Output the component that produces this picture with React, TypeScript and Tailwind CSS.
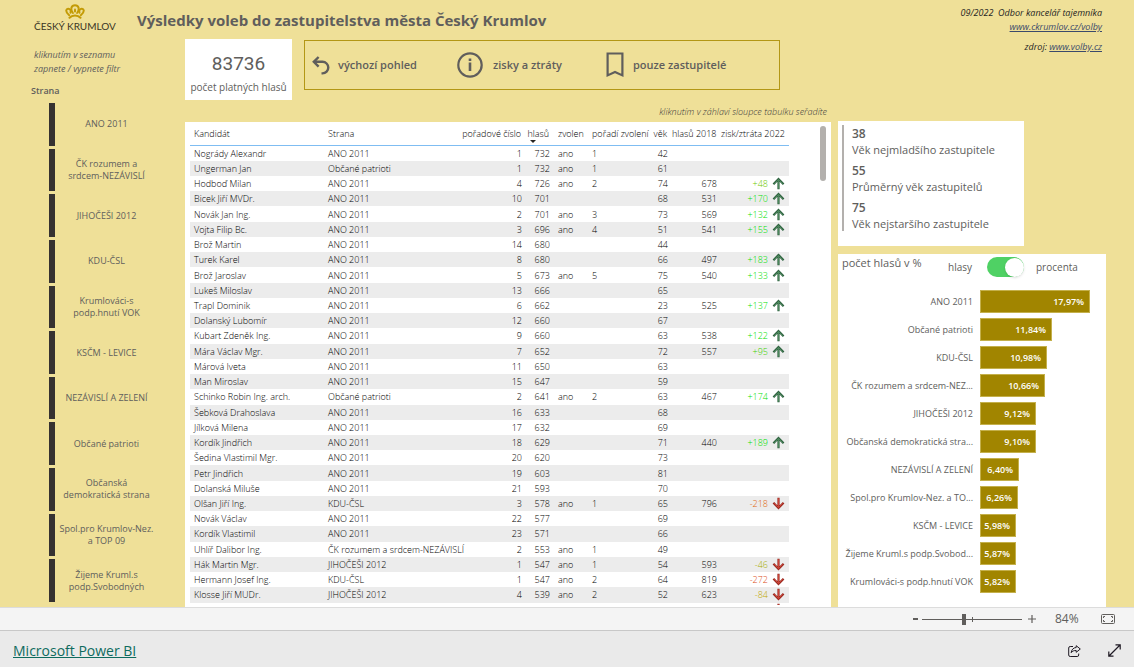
import React, { useState } from "react";

type Row = [
  name: string,
  party: string,
  no: number,
  votes: number,
  elected: string,
  order: string,
  age: number,
  votes2018: string,
  diff: string,
];

const A = "ANO 2011";
const rows: Row[] = [
  ["Nogrády Alexandr", A, 1, 732, "ano", "1", 42, "", ""],
  ["Ungerman Jan", "Občané patrioti", 1, 732, "ano", "1", 61, "", ""],
  ["Hodboď Milan", A, 4, 726, "ano", "2", 74, "678", "+48"],
  ["Bicek Jiří MVDr.", A, 10, 701, "", "", 68, "531", "+170"],
  ["Novák Jan Ing.", A, 2, 701, "ano", "3", 73, "569", "+132"],
  ["Vojta Filip Bc.", A, 3, 696, "ano", "4", 51, "541", "+155"],
  ["Brož Martin", A, 14, 680, "", "", 44, "", ""],
  ["Turek Karel", A, 8, 680, "", "", 66, "497", "+183"],
  ["Brož Jaroslav", A, 5, 673, "ano", "5", 75, "540", "+133"],
  ["Lukeš Miloslav", A, 13, 666, "", "", 65, "", ""],
  ["Trapl Dominik", A, 6, 662, "", "", 23, "525", "+137"],
  ["Dolanský Lubomír", A, 12, 660, "", "", 67, "", ""],
  ["Kubart Zdeněk Ing.", A, 9, 660, "", "", 63, "538", "+122"],
  ["Mára Václav Mgr.", A, 7, 652, "", "", 72, "557", "+95"],
  ["Márová Iveta", A, 11, 650, "", "", 63, "", ""],
  ["Man Miroslav", A, 15, 647, "", "", 59, "", ""],
  ["Schinko Robin Ing. arch.", "Občané patrioti", 2, 641, "ano", "2", 63, "467", "+174"],
  ["Šebková Drahoslava", A, 16, 633, "", "", 68, "", ""],
  ["Jílková Milena", A, 17, 632, "", "", 69, "", ""],
  ["Kordík Jindřich", A, 18, 629, "", "", 71, "440", "+189"],
  ["Šedina Vlastimil Mgr.", A, 20, 620, "", "", 73, "", ""],
  ["Petr Jindřich", A, 19, 603, "", "", 81, "", ""],
  ["Dolanská Miluše", A, 21, 593, "", "", 70, "", ""],
  ["Olšan Jiří Ing.", "KDU-ČSL", 3, 578, "ano", "1", 65, "796", "-218"],
  ["Novák Václav", A, 22, 577, "", "", 69, "", ""],
  ["Kordík Vlastimil", A, 23, 571, "", "", 66, "", ""],
  ["Uhlíř Dalibor Ing.", "ČK rozumem a srdcem-NEZÁVISLÍ", 2, 553, "ano", "1", 49, "", ""],
  ["Hák Martin Mgr.", "JIHOČEŠI 2012", 1, 547, "ano", "1", 54, "593", "-46"],
  ["Hermann Josef Ing.", "KDU-ČSL", 1, 547, "ano", "2", 64, "819", "-272"],
  ["Klosse Jiří MUDr.", "JIHOČEŠI 2012", 4, 539, "ano", "2", 52, "623", "-84"],
];

const diffColor = (d: string) => {
  const n = Number(d);
  if (n > 100) return "text-[#00e000]";
  if (n > 60) return "text-[#3fd000]";
  if (n > 0) return "text-[#6cc800]";
  if (n > -60) return "text-[#a8ac00]";
  if (n > -100) return "text-[#c0a800]";
  if (n > -250) return "text-[#e0660c]";
  return "text-[#dc4e20]";
};

const parties = [
  ["ANO 2011"],
  ["ČK rozumem a", "srdcem-NEZÁVISLÍ"],
  ["JIHOČEŠI 2012"],
  ["KDU-ČSL"],
  ["Krumlováci-s", "podp.hnutí VOK"],
  ["KSČM - LEVICE"],
  ["NEZÁVISLÍ A ZELENÍ"],
  ["Občané patrioti"],
  ["Občanská", "demokratická strana"],
  ["Spol.pro Krumlov-Nez.", "a TOP 09"],
  ["Žijeme Kruml.s", "podp.Svobodných"],
];

const bars: [string, number][] = [
  ["ANO 2011", 17.97],
  ["Občané patrioti", 11.84],
  ["KDU-ČSL", 10.98],
  ["ČK rozumem a srdcem-NEZ...", 10.66],
  ["JIHOČEŠI 2012", 9.12],
  ["Občanská demokratická stra...", 9.1],
  ["NEZÁVISLÍ A ZELENÍ", 6.4],
  ["Spol.pro Krumlov-Nez. a TO...", 6.26],
  ["KSČM - LEVICE", 5.98],
  ["Žijeme Kruml.s podp.Svobod...", 5.87],
  ["Krumlováci-s podp.hnutí VOK", 5.82],
];

const ages = [
  ["38", "Věk nejmladšího zastupitele"],
  ["55", "Průměrný věk zastupitelů"],
  ["75", "Věk nejstaršího zastupitele"],
];

function Crown() {
  return (
    <svg viewBox="0 0 20 15" className="h-[15px] w-5" fill="none" stroke="#c39b06" strokeWidth="2" strokeLinecap="round">
      <path d="M4.200 11.200C2.400 9.800 1 8 1.300 6.200c.4-1.800 3-2 4-.4.5.9.5 2 .2 2.900" />
      <path d="M15.800 11.200c1.800-1.400 3.200-3.200 2.900-5-.4-1.800-3-2-4-.4-.5.9-.5 2-.2 2.900" />
      <path d="M7.900 9C6.700 7.500 5.900 5.500 6.400 3.700 7 1.900 9 1.200 10 1.200s3 .7 3.600 2.500c.5 1.800-.3 3.800-1.500 5.300" />
      <path d="M10 5.500v2" />
      <path d="M4.500 13.700c1.400-1.500 3.400-2.300 5.500-2.300s4.100.8 5.500 2.300" />
    </svg>
  );
}

function Arrow({ down }: { down: boolean }) {
  return (
    <svg viewBox="0 0 13 13" className={down ? "h-[13px] w-[13px] rotate-180" : "h-[13px] w-[13px]"} fill="none" aria-hidden="true">
      <path d="M6.500 12.300V2.500M1.400 7.200l5.100-5.200 5.100 5.200" stroke={down ? "#9c2a20" : "#2f6340"} strokeWidth="2.200" />
      <path d="M6.500 11.600V2.700M2.300 6.700l4.200-4.200 4.200 4.200" stroke={down ? "#d0463a" : "#4f8a5f"} strokeWidth=".9" />
    </svg>
  );
}

function UndoIcon() {
  return (
    <svg viewBox="0 0 18 19" className="h-[19px] w-[18px]" fill="none" stroke="#605e5c" strokeWidth="2.400">
      <path d="M2 5.800h8.500a5.600 5.600 0 0 1 0 11.600H9.500" />
      <path d="M6.600 1 1.800 5.800l4.800 4.800" />
    </svg>
  );
}

function InfoIcon() {
  return (
    <svg viewBox="0 0 26 26" className="size-[26px]" fill="none" stroke="#605e5c">
      <circle cx="13" cy="13" r="11.700" strokeWidth="2.200" />
      <path d="M13 10.500V19M13 6.500v2.500" strokeWidth="2.600" />
    </svg>
  );
}

function BookmarkIcon() {
  return (
    <svg viewBox="0 0 18 26" className="h-[26px] w-[18px]" fill="none" stroke="#605e5c" strokeWidth="2.200">
      <path d="M1.600 1.500h14.800V23.400L9 20l-7.400 3.400z" />
    </svg>
  );
}

function Sidebar() {
  return (
    <aside className="flex w-[185px] shrink-0 flex-col pb-[5px] text-[#605e5c]">
      <p className="pt-[9px] pl-[34px] text-[9px] leading-[14px] italic">
        kliknutím v seznamu
        <br />
        zapnete / vypnete filtr
      </p>
      <h2 className="mt-2 pl-[31px] text-[9px] leading-[14px] font-semibold">Strana</h2>
      <div className="mt-[5px] flex flex-1 flex-col gap-[3px] pl-[49px]">
        {parties.map((lines) => (
          <button key={lines[0]} type="button" className="flex flex-1 items-stretch text-[9px] leading-[12px]">
            <span className="w-[6px] bg-[#363230]" />
            <span className="flex w-[103px] flex-col justify-center text-center whitespace-nowrap">
              {lines.map((l) => (
                <span key={l}>{l}</span>
              ))}
            </span>
          </button>
        ))}
      </div>
    </aside>
  );
}

function Candidates() {
  return (
    <section className="flex-1 bg-white pr-[42px] pl-[5px]">
      <div className="mb-[2px] h-[483px] overflow-hidden">
        <table className="h-[494px] w-full table-fixed border-collapse text-[9px] leading-[15px] font-light whitespace-nowrap text-black">
          <colgroup>
            <col className="w-[134px]" />
            <col />
            <col className="w-[65px]" />
            <col className="w-[28px]" />
            <col className="w-[34px]" />
            <col className="w-[63px]" />
            <col className="w-[21px]" />
            <col className="w-[49px]" />
            <col className="w-[68px]" />
          </colgroup>
          <thead>
            <tr className="h-[23px] border-b border-[#7fbdf2] text-left align-middle [&>th]:py-0 [&>th]:font-light">
              <th className="px-1">Kandidát</th>
              <th className="px-1">Strana</th>
              <th className="pr-[5px] text-right">pořadové číslo</th>
              <th className="relative pr-[5px] text-right">
                hlasů
                <span className="absolute top-[18px] left-[4px] border-x-[3px] border-t-[3px] border-x-transparent border-t-[#252423]" />
              </th>
              <th className="px-1">zvolen</th>
              <th className="px-1">pořadí zvolení</th>
              <th className="pr-[5px] text-right">věk</th>
              <th className="pr-[5px] text-right">hlasů 2018</th>
              <th className="pr-[5px] text-right">zisk/ztráta 2022</th>
            </tr>
          </thead>
          <tbody>
            {rows.map((r) => (
              <tr key={r[0]} className="even:bg-[#ececec] [&>td]:px-1 [&>td]:py-0">
                <td>{r[0]}</td>
                <td>{r[1]}</td>
                <td className="text-right">{r[2]}</td>
                <td className="text-right">{r[3]}</td>
                <td>{r[4]}</td>
                <td>{r[5]}</td>
                <td className="text-right">{r[6]}</td>
                <td className="text-right">{r[7]}</td>
                <td>
                  {r[8] && (
                    <span className="flex items-center justify-end gap-[4px]">
                      <span className={diffColor(r[8])}>{r[8]}</span>
                      <Arrow down={r[8].startsWith("-")} />
                    </span>
                  )}
                </td>
              </tr>
            ))}
            <tr>
              <td colSpan={8} />
              <td className="px-1 py-0">
                <span className="flex justify-end">
                  <Arrow down />
                </span>
              </td>
            </tr>
          </tbody>
        </table>
      </div>
    </section>
  );
}

function ChartCard() {
  const [percent, setPercent] = useState(true);
  return (
    <section className="mt-2 flex-1 bg-white text-[#605e5c]">
      <div className="flex h-9 pl-1">
        <h2 className="w-[106px] text-[11px] leading-[17px]">počet hlasů v %</h2>
        <label className="flex h-[26px] items-center text-[10px]">
          <span className="w-[39px]">hlasy</span>
          <input
            type="checkbox"
            role="switch"
            aria-label="hlasy / procenta"
            checked={percent}
            onChange={(e) => setPercent(e.target.checked)}
            className="flex h-5 w-[37px] appearance-none items-center rounded-full bg-[#d0d0d0] before:size-[19px] before:rounded-full before:bg-white before:shadow checked:justify-end checked:bg-[#4fd164]"
          />
          <span className="pl-3">procenta</span>
        </label>
      </div>
      <ul className="flex flex-col gap-[5px] text-[9px]">
        {bars.map(([name, v]) => (
          <li key={name} className="flex h-[23px] items-center">
            <span className="flex w-[135px] justify-end whitespace-nowrap">{name}</span>
            <span
              className="ml-[7px] flex h-full items-center justify-end border border-[#c4b04c] bg-[#a18500] pr-[5px] font-semibold text-white"
              style={{ width: Math.round(v * 6.1) }}
            >
              {v.toFixed(2).replace(".", ",")}%
            </span>
          </li>
        ))}
      </ul>
    </section>
  );
}

export default function App() {
  const [zoom, setZoom] = useState(42);
  return (
    <div className="flex min-h-screen flex-col font-['Open_Sans','Noto_Sans',sans-serif]">
      <main className="flex flex-1 bg-[#efe098]">
        <div className="flex min-w-0 flex-1 flex-col">
          <header className="flex h-[39px]">
            <div className="flex w-[137px] flex-col items-center pt-1 pl-[13px] text-[#3a3524]">
              <Crown />
              <span className="font-['Lato',sans-serif] text-[10px] leading-[14px]">ČESKÝ KRUMLOV</span>
            </div>
            <h1 className="pt-[9px] text-[15px] leading-[22px] font-bold text-[#605e5c]">
              Výsledky voleb do zastupitelstva města Český Krumlov
            </h1>
          </header>
          <div className="flex flex-1">
            <Sidebar />
            <div className="flex min-w-0 flex-1 flex-col">
              <div className="flex items-start gap-3">
                <div className="flex h-[61px] w-[107px] flex-col items-center bg-white pt-3 text-[#605e5c]">
                  <span className="font-['Roboto',sans-serif] text-[19px] leading-[25px]">83736</span>
                  <span className="text-[10px] leading-[23px] whitespace-nowrap">počet platných hlasů</span>
                </div>
                <nav className="mt-px flex h-[50px] w-[476px] items-center border border-[#b39715] pl-[7px] text-[11px] font-semibold whitespace-nowrap text-[#605e5c]">
                  <button type="button" className="flex w-[145px] items-center gap-2">
                    <UndoIcon />
                    výchozí pohled
                  </button>
                  <button type="button" className="flex w-[149px] items-center gap-[10px]">
                    <InfoIcon />
                    zisky a ztráty
                  </button>
                  <button type="button" className="flex items-center gap-[9px]">
                    <BookmarkIcon />
                    pouze zastupitelé
                  </button>
                </nav>
              </div>
              <p className="h-[22px] pt-[4px] pr-1 text-right text-[9px] leading-[15px] font-light text-[#3b3938] italic">
                kliknutím v záhlaví sloupce tabulku seřadíte
              </p>
              <div className="relative flex flex-1">
                <Candidates />
                <span className="absolute top-[4px] right-[5px] h-[55px] w-[6px] rounded-full bg-[#b3b0ad]" />
              </div>
            </div>
          </div>
        </div>

        <aside className="ml-[7px] flex w-[296px] flex-col pr-[28px]">
          <div className="h-[121px] pt-[6px] pr-1 text-right text-[9px] leading-[14px] whitespace-nowrap text-[#252423] italic">
            <p>09/2022&nbsp; Odbor kancelář tajemníka</p>
            <p>
              <a href="https://www.ckrumlov.cz/volby" className="text-[#3b4a6b] underline">
                www.ckrumlov.cz/volby
              </a>
            </p>
            <p className="mt-[6px]">
              zdroj:{" "}
              <a href="https://www.volby.cz" className="text-[#3b4a6b] underline">
                www.volby.cz
              </a>
            </p>
          </div>
          <section className="h-[125px] w-[186px] bg-white pt-1 pl-1 text-[#605e5c]">
            <dl className="flex h-[106px] flex-col gap-[5px] border-l-2 border-[#b3b0ad] pl-[8px] whitespace-nowrap">
              {ages.map(([n, label]) => (
                <div key={n} className="flex h-8 flex-col-reverse">
                  <dt className="text-[11px] leading-[14px]">{label}</dt>
                  <dd className="text-[12px] leading-[18px] font-semibold">{n}</dd>
                </div>
              ))}
            </dl>
          </section>
          <ChartCard />
        </aside>
      </main>

      <div className="flex h-[23px] items-center justify-end border-t border-[#dcdcdc] bg-[#f4f4f4] pr-[19px] text-[#605e5c]">
        <button type="button" aria-label="Oddálit" className="flex w-[9px] items-center">
          <span className="h-[2px] w-[5px] bg-[#605e5c]" />
        </button>
        <span className="relative flex items-center">
          <input
            type="range"
            aria-label="Lupa"
            min={0}
            max={100}
            value={zoom}
            onChange={(e) => setZoom(Number(e.target.value))}
            className="h-[11px] w-[100px] appearance-none bg-transparent [&::-webkit-slider-runnable-track]:h-px [&::-webkit-slider-runnable-track]:bg-[#605e5c] [&::-webkit-slider-thumb]:-mt-[5px] [&::-webkit-slider-thumb]:h-[11px] [&::-webkit-slider-thumb]:w-1 [&::-webkit-slider-thumb]:appearance-none [&::-webkit-slider-thumb]:bg-[#605e5c]"
          />
          <span className="absolute left-1/2 h-[5px] w-px bg-[#605e5c]" />
        </span>
        <button type="button" aria-label="Přiblížit" className="ml-[6px]">
          <svg viewBox="0 0 8 8" className="size-2" stroke="#605e5c" strokeWidth="1.200">
            <path d="M4 0v8M0 4h8" />
          </svg>
        </button>
        <span className="ml-[19px] w-[46px] text-[12px]">84%</span>
        <button type="button" aria-label="Přizpůsobit stránce">
          <svg viewBox="0 0 14 10" className="h-[10px] w-[14px]" fill="none" stroke="#605e5c">
            <rect x=".5" y=".5" width="13" height="9" rx="1" />
            <path d="M2.500 4V2.500H4M10 2.500h1.500V4M2.500 6v1.500H4M10 7.500h1.500V6" />
          </svg>
        </button>
      </div>

      <footer className="flex h-[37px] items-center border-t border-[#c8c8c8] bg-[#eaeaea] pt-[3px] pr-[13px] pl-[13px]">
        <a href="https://powerbi.microsoft.com" className="flex-1 text-[14px] text-[#0e6b5e] underline">
          Microsoft Power BI
        </a>
        <button type="button" aria-label="Sdílet" className="mr-[27px]">
          <svg viewBox="0 0 13 12" className="h-3 w-[13px]" fill="none" stroke="#1f1a24" strokeLinejoin="round">
            <path d="M5 1.500H2.200A1.500 1.500 0 0 0 .7 3v7a1.500 1.500 0 0 0 1.500 1.500h7A1.500 1.500 0 0 0 10.700 10V8.600" />
            <path d="M8.200.7 12.300 4 8.200 7.300V5.500C6 5.400 4.400 6 3.200 7.700 3.500 4.800 5.200 2.700 8.200 2.500z" />
          </svg>
        </button>
        <button type="button" aria-label="Celá obrazovka">
          <svg viewBox="0 0 13 13" className="size-[13px]" fill="none" stroke="#1f1a24" strokeWidth="1.200">
            <path d="M1 12 12 1M7.500.8h4.700v4.700M.8 7.500v4.700h4.700" />
          </svg>
        </button>
      </footer>
    </div>
  );
}
